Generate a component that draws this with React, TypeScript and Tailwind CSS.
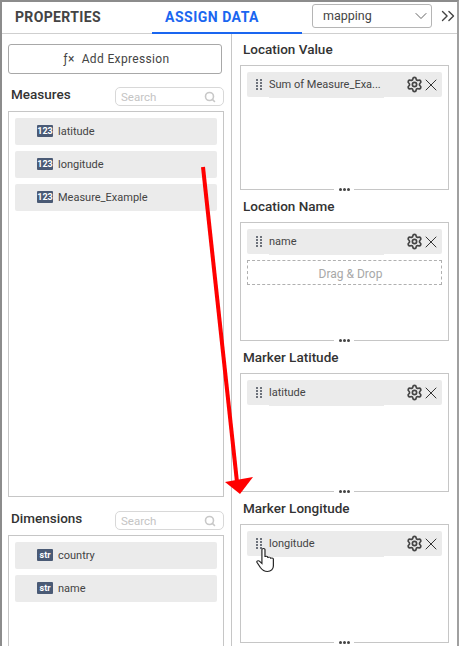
import { Settings, X, ChevronDown, ChevronsRight, Search } from "lucide-react";

const font = { fontFamily: "Roboto, sans-serif" };

function DragDots() {
  return (
    <div className="grid grid-cols-2 gap-x-[2px] gap-y-[1px] w-[5px] shrink-0">
      {[0, 1, 2, 3, 4, 5, 6, 7].map((i) => (
        <div key={i} className="w-[2px] h-[2px] bg-[#6d727b]"></div>
      ))}
    </div>
  );
}

function SearchBox() {
  return (
    <div className="w-[109px] h-[19px] border border-[#d8d8d8] rounded-[5px] flex items-center justify-between pl-[5px] pr-[7px] bg-white shrink-0">
      <span className="text-[11.5px] text-[#c4c4c4] mt-[2px]">Search</span>
      <Search size={12} strokeWidth={3.2} className="text-[#c8c8c8]" />
    </div>
  );
}

function FieldItem({ type, label }: { type: string; label: string }) {
  return (
    <div className="h-[27px] bg-[#ebebeb] rounded-[2px] flex items-center pl-[22px] gap-[5px] shrink-0">
      <span className="w-[16px] h-[12px] -mt-[1px] bg-[#4a5a75] rounded-[1px] text-white text-[9px] font-bold leading-[12px] text-center">
        {type}
      </span>
      <span className="mt-[1px] text-[11px] text-[#444]">{label}</span>
    </div>
  );
}

function BoundItem({ label }: { label: string }) {
  return (
    <div className="relative h-[25px] bg-[#ebebeb] rounded-[2px] flex items-center pl-[9px] pr-[1px] shrink-0">
      <DragDots />
      <span className="ml-[8px] mt-[2px] flex-1 text-[11px] text-[#444] truncate">{label}</span>
      <Settings size={17} strokeWidth={2.4} className="text-[#444] shrink-0" />
      <X size={20} strokeWidth={1.2} className="text-[#333] -ml-[2px] shrink-0" />
      <div className="absolute left-[22px] top-[25px] w-[115px] h-[1px] bg-[#ebebeb]"></div>
    </div>
  );
}

function DropSection({
  title,
  height,
  mb,
  children,
}: {
  title: string;
  height: string;
  mb: string;
  children: React.ReactNode;
}) {
  return (
    <div className={mb}>
      <div className="h-[17px] leading-[17px] text-[13.5px] font-medium text-[#333] ml-[3px] mb-[7px]">{title}</div>
      <div className={`relative ${height} border border-[#c6c6c6] p-[6px] flex flex-col gap-[6px]`}>
        {children}
        <div className="absolute -bottom-[2px] left-[93px] w-[20px] h-[4px] bg-white flex items-center justify-center gap-[1px]">
          <div className="w-[3px] h-[3px] rounded-full bg-[#444]"></div>
          <div className="w-[3px] h-[3px] rounded-full bg-[#444]"></div>
          <div className="w-[3px] h-[3px] rounded-full bg-[#444]"></div>
        </div>
      </div>
    </div>
  );
}

export default function App() {
  return (
    <div
      className="relative w-[459px] h-[646px] overflow-hidden bg-white border-2 border-b-0 border-[#8c8c8c] border-r-[#a0a0a0]"
      style={font}
    >
      {/* Header */}
      <div className="h-[32px] border-b border-[#cfcfcf] flex items-start relative">
        <div className="w-[150px] h-[31px] shrink-0 pl-[13px] pt-[5px] text-[14px] font-bold tracking-[0.35px] text-[#444]">
          PROPERTIES
        </div>
        <div className="w-[150px] h-[32px] shrink-0 border-b-2 border-[#1a66f0] pl-[13px] pt-[5px] text-[14px] font-bold tracking-[0.5px] text-[#1a66f0]">
          ASSIGN DATA
        </div>
        <div className="ml-[10px] mt-[2px] w-[120px] h-[24px] shrink-0 border border-[#b5b5b5] rounded-[3px] flex items-center justify-between pl-[10px] text-[12.5px] text-[#444]">
          mapping
          <ChevronDown size={20} strokeWidth={1.1} className="text-[#555] shrink-0" />
        </div>
        <ChevronsRight size={22} strokeWidth={1.5} className="ml-[5px] mt-[3px] text-[#444] shrink-0" />
      </div>

      <div className="flex h-[612px]">
        {/* Left column */}
        <div className="w-[230px] border-r border-[#c6c6c6] pl-[6px] pt-[10px] pr-[7px] shrink-0">
          <div className="h-[30px] w-[214px] border border-[#a8a8a8] rounded-[3px] flex items-center justify-center pl-[3px] text-[12px] text-[#444] tracking-[0.35px]">
            <span className="text-[12px] mr-[7px]">ƒ×</span>Add Expression
          </div>

          <div className="mt-[13px] h-[19px] flex items-center justify-between">
            <span className="ml-[3px] -mt-[5px] text-[13.5px] font-medium text-[#333]">Measures</span>
            <SearchBox />
          </div>
          <div className="mt-[5px] h-[386px] border border-[#c6c6c6] p-[6px] flex flex-col gap-[6px]">
            <FieldItem type="123" label="latitude" />
            <FieldItem type="123" label="longitude" />
            <FieldItem type="123" label="Measure_Example" />
          </div>

          <div className="mt-[14px] h-[19px] flex items-center justify-between">
            <span className="ml-[3px] -mt-[5px] text-[13.5px] font-medium text-[#333]">Dimensions</span>
            <SearchBox />
          </div>
          <div className="mt-[5px] h-[120px] border border-[#c6c6c6] p-[6px] flex flex-col gap-[6px]">
            <FieldItem type="str" label="country" />
            <FieldItem type="str" label="name" />
          </div>
        </div>

        {/* Right column */}
        <div className="flex-1 pl-[8px] pr-[8px] pt-[7px]">
          <DropSection title="Location Value" height="h-[125px]" mb="mb-[8px]">
            <BoundItem label="Sum of Measure_Exa..." />
          </DropSection>
          <DropSection title="Location Name" height="h-[119px]" mb="mb-[8px]">
            <BoundItem label="name" />
            <div className="h-[25px] border border-dashed border-[#b0b0b0] flex items-center justify-center pl-[12px] pt-[2px] text-[12px] text-[#a8a8a8] shrink-0">
              Drag &amp; Drop
            </div>
          </DropSection>
          <DropSection title="Marker Latitude" height="h-[119px]" mb="mb-[8px]">
            <BoundItem label="latitude" />
          </DropSection>
          <DropSection title="Marker Longitude" height="h-[119px]" mb="mb-0">
            <BoundItem label="longitude" />
          </DropSection>
        </div>
      </div>

      {/* Red annotation arrow */}
      <svg className="absolute left-[-2px] top-[-2px] pointer-events-none" width="459" height="646">
        <line x1="203" y1="167" x2="237" y2="482" stroke="#ff0000" strokeWidth="4" />
        <polygon points="225,482 253,477 240,494" fill="#ff0000" />
      </svg>

      {/* Hand cursor */}
      <svg
        className="absolute left-[254px] top-[544px] pointer-events-none"
        width="26"
        height="28"
        viewBox="0 0 22 28"
        preserveAspectRatio="none"
      >
        <path
          d="M5 3.5c0-1.5 2.6-1.5 2.6 0V11c0-1 2.4-1 2.4 0.3V12c0-1.2 2.4-1.2 2.4 0.2v0.6c0-1.1 2.3-1.1 2.3 0.3V20c0 3-2 5.5-5 5.5-3 0-4.5-1.5-6-4L0.9 16.5c-.7-1.4 1-2.4 2-1.3L5 17.5V3.5z"
          fill="#ffffff"
          stroke="#222"
          strokeWidth="1"
        />
      </svg>
    </div>
  );
}
